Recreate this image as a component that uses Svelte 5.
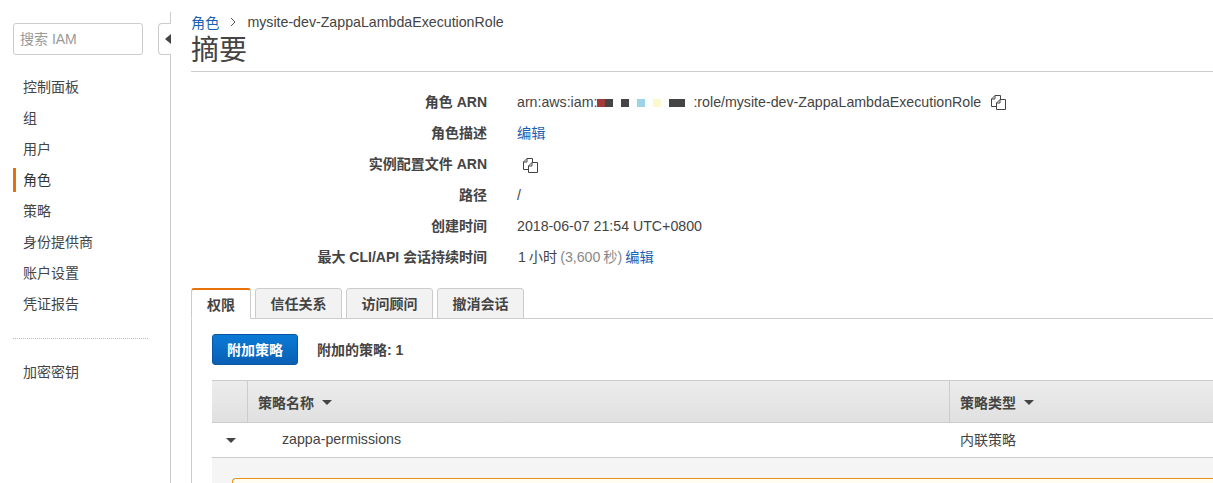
<script>
  const navItems = ["控制面板", "组", "用户", "角色", "策略", "身份提供商", "账户设置", "凭证报告"];
  const tabs = ["权限", "信任关系", "访问顾问", "撤消会话"];
  const redacted = [
    { color: "linear-gradient(90deg, #a33a3a 50%, #444 50%)", width: 16, gap: 8 },
    { color: "#444", width: 8, gap: 8 },
    { color: "#9cd3e8", width: 8, gap: 8 },
    { color: "#fbf9d0", width: 8, gap: 8 },
    { color: "#444", width: 16, gap: 8 },
  ];
</script>

{#snippet copyIcon()}
  <svg class="copy" width="17" height="17" viewBox="0 0 17 17" fill="none" stroke="#444" stroke-width="1">
    <path d="M6.5 12.5H1.5V5L5 1.5H10.5V5.5" />
    <path d="M5 1.5V5H1.5" />
    <path d="M6.5 15.5V9L10 5.5H15.5V15.5Z" />
    <path d="M10 5.5V9H6.5" />
  </svg>
{/snippet}

<div class="page">
  <aside class="sidebar">
    <div class="search">搜索 IAM</div>
    <nav class="nav">
      {#each navItems as item}
        <div class="nav-item" class:active={item === "角色"}>{item}</div>
      {/each}
    </nav>
    <div class="divider"></div>
    <div class="nav-item">加密密钥</div>
    <div class="collapse"><span class="collapse-arrow"></span></div>
  </aside>

  <main class="main">
    <div class="crumbs">
      <span class="link">角色</span>
      <svg class="crumb-sep" width="8" height="10" viewBox="0 0 8 10" fill="none" stroke="#555" stroke-width="1">
        <path d="M2 1l4 4-4 4" />
      </svg>
      <span>mysite-dev-ZappaLambdaExecutionRole</span>
    </div>
    <h1 class="title">摘要</h1>

    <div class="summary">
      <div class="label">角色 ARN</div>
      <div class="value">
        <span>arn:aws:iam:</span><span class="redactions">
          {#each redacted as r}
            <i style="background:{r.color};width:{r.width}px;margin-right:{r.gap}px"></i>
          {/each}
        </span><span>:role/mysite-dev-ZappaLambdaExecutionRole</span>
        <span class="copy-after">{@render copyIcon()}</span>
      </div>
      <div class="label">角色描述</div>
      <div class="value"><span class="link">编辑</span></div>
      <div class="label">实例配置文件 ARN</div>
      <div class="value"><span class="copy-solo">{@render copyIcon()}</span></div>
      <div class="label">路径</div>
      <div class="value">/</div>
      <div class="label">创建时间</div>
      <div class="value">2018-06-07 21:54 UTC+0800</div>
      <div class="label">最大 CLI/API 会话持续时间</div>
      <div class="value"><span class="duration">1 小时 <span class="muted">(3,600 秒)</span> <span class="link">编辑</span></span></div>
    </div>

    <div class="tabs">
      {#each tabs as tab, i}
        <div class="tab" class:current={i === 0}>{tab}</div>
      {/each}
    </div>

    <section class="panel">
      <div class="actions">
        <div class="btn">附加策略</div>
        <div class="count">附加的策略: 1</div>
      </div>

      <div class="table">
        <div class="row head">
          <div class="cell c0"></div>
          <div class="cell c1">策略名称<span class="caret"></span></div>
          <div class="cell c2">策略类型<span class="caret"></span></div>
        </div>
        <div class="row body">
          <div class="cell c0"><span class="caret"></span></div>
          <div class="cell c1 policy">zappa-permissions</div>
          <div class="cell c2">内联策略</div>
        </div>
        <div class="detail">
          <div class="notice"></div>
        </div>
      </div>
    </section>
  </main>
</div>

<style>
  :global(body) {
    margin: 0;
    background: #fff;
    overflow: hidden;
  }
  .page {
    display: flex;
    height: 483px;
    overflow: hidden;
    font-family: "Liberation Sans", "Noto Sans CJK SC", sans-serif;
    font-size: 14px;
    color: #444;
  }
  .sidebar {
    position: relative;
    flex: 0 0 171px;
    box-sizing: border-box;
    border-right: 1px solid #ccc;
    margin-top: 12px;
    padding-top: 11px;
  }
  .search {
    box-sizing: border-box;
    width: 130px;
    height: 32px;
    margin-left: 13px;
    padding-left: 6px;
    line-height: 30px;
    border: 1px solid #ccc;
    border-radius: 3px;
    color: #999;
  }
  .nav {
    margin-top: 17px;
  }
  .nav-item {
    height: 31px;
    line-height: 31px;
    padding-left: 23px;
  }
  .nav-item.active {
    position: relative;
    color: #333;
  }
  .nav-item.active::before {
    content: "";
    position: absolute;
    left: 13px;
    top: 3px;
    width: 3px;
    height: 24px;
    background: #e8710a;
  }
  .divider {
    width: 135px;
    margin: 18px 0 18px 13px;
    border-top: 1px dotted #bbb;
  }
  .collapse {
    position: absolute;
    right: -1px;
    top: 11px;
    box-sizing: border-box;
    width: 13px;
    height: 32px;
    background: #fff;
    border: 1px solid #ccc;
    border-right: none;
    border-radius: 4px 0 0 4px;
  }
  .collapse-arrow {
    position: absolute;
    left: 6px;
    top: 10px;
    border-style: solid;
    border-width: 5px 6px 5px 0;
    border-color: transparent #444 transparent transparent;
  }
  .main {
    flex: 1;
    min-width: 0;
    margin-left: 20px;
  }
  .crumbs {
    display: flex;
    align-items: center;
    height: 20px;
    margin-top: 12px;
    font-size: 14.2px;
  }
  .crumb-sep {
    margin: 0 10px;
  }
  .link {
    color: #1a5fb4;
  }
  .title {
    margin: 0;
    height: 39px;
    line-height: 38px;
    font-size: 28px;
    font-weight: 400;
    color: #444;
    border-bottom: 1px solid #ccc;
  }
  .summary {
    display: grid;
    grid-template-columns: 296px 1fr;
    column-gap: 30px;
    grid-auto-rows: 31px;
    margin-top: 15px;
    line-height: 31px;
  }
  .label {
    text-align: right;
    font-weight: 700;
    font-size: 14px;
  }
  .value {
    display: flex;
    align-items: center;
    white-space: pre;
    font-size: 14.2px;
  }
  .duration {
    word-spacing: -1px;
    margin-left: 1px;
  }
  .redactions {
    display: inline-flex;
    align-items: center;
    height: 8px;
  }
  .redactions i {
    display: block;
    height: 8px;
  }
  .copy-after {
    display: inline-flex;
    margin-left: 9px;
  }
  .copy-solo {
    display: inline-flex;
    margin: 1px 0 0 5px;
  }
  .muted {
    color: #888;
  }
  .tabs {
    display: flex;
    gap: 4px;
    height: 31px;
    margin-top: 15px;
    box-sizing: border-box;
    border-bottom: 1px solid #ccc;
  }
  .tab {
    box-sizing: border-box;
    width: 87px;
    height: 31px;
    line-height: 31px;
    text-align: center;
    background: #f2f2f2;
    border: 1px solid #ccc;
    border-radius: 3px 3px 0 0;
    font-weight: 700;
    font-size: 14px;
  }
  .tab.current {
    width: 60px;
    height: 31px;
    background: #fff;
    border-top: 2px solid #e8710a;
    border-bottom-color: #fff;
    color: #444;
  }
  .panel {
    border-left: 1px solid #ccc;
    padding: 15px 0 0 20px;
  }
  .actions {
    display: flex;
    align-items: center;
    height: 31px;
  }
  .btn {
    box-sizing: border-box;
    width: 86px;
    height: 31px;
    line-height: 30px;
    text-align: center;
    color: #fff;
    font-weight: 700;
    font-size: 14px;
    background: linear-gradient(#0a7ad6, #0a5fb4);
    border: 1px solid #0a56a5;
    border-radius: 3px;
  }
  .count {
    margin: -1px 0 0 19px;
    font-weight: 700;
    font-size: 14px;
  }
  .table {
    margin-top: 15px;
  }
  .row {
    display: flex;
    align-items: center;
    box-sizing: border-box;
  }
  .row.head {
    height: 43px;
    background: linear-gradient(#ececec, #e0e0e0);
    border-top: 1px solid #ccc;
    border-bottom: 1px solid #ccc;
    font-weight: 700;
    font-size: 14px;
  }
  .row.body {
    height: 35px;
    padding-bottom: 2px;
    border-bottom: 1px solid #ccc;
  }
  .cell {
    box-sizing: border-box;
    display: flex;
    align-items: center;
    height: 100%;
  }
  .c0 {
    flex: 0 0 35px;
    justify-content: center;
  }
  .c1 {
    flex: 0 0 702px;
    padding-left: 10px;
  }
  .c2 {
    flex: 1;
    padding-left: 10px;
  }
  .head .c1,
  .head .c2 {
    border-left: 1px solid #ccc;
  }
  .body .c1 {
    padding-left: 35px;
    font-size: 14.2px;
  }
  .body .c2 {
    margin: -1px 0 0 1px;
    font-size: 14px;
  }
  .caret {
    display: inline-block;
    margin-left: 8px;
    margin-top: 2px;
    border-style: solid;
    border-width: 5px 5px 0 5px;
    border-color: #444 transparent transparent transparent;
  }
  .body .caret {
    margin-left: 2px;
  }
  .detail {
    background: #f5f5f5;
    padding: 20px 0 0 20px;
    height: 60px;
  }
  .notice {
    height: 40px;
    background: #fffdf2;
    border: 1px solid #e8911a;
    border-right: none;
    border-radius: 4px 0 0 0;
  }
</style>
